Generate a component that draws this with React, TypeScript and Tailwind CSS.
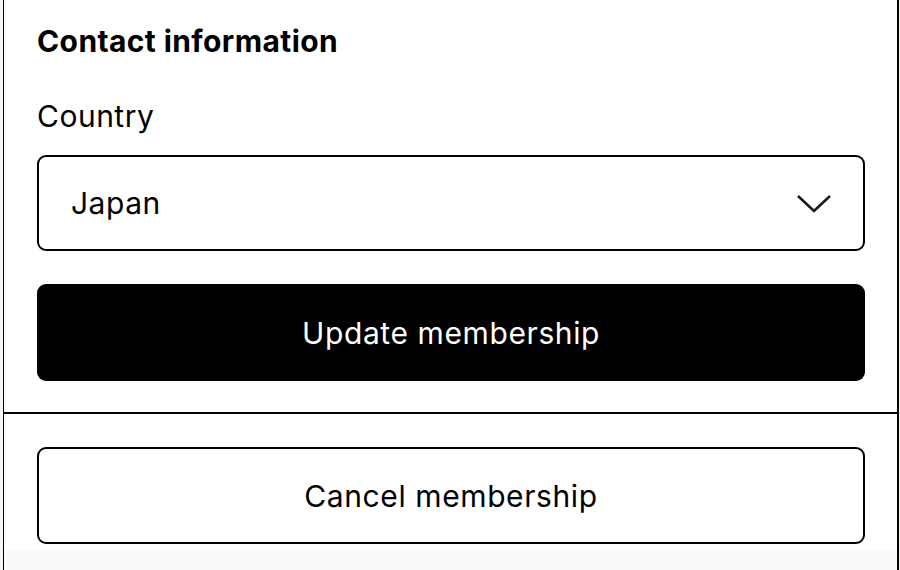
import React from 'react';

const Chevron = () => (
  <svg width="36" height="22" viewBox="0 0 36 22" fill="none" aria-hidden="true">
    <polyline points="2,4 18,19 34,4" stroke="#1a1a1a" strokeWidth="2.6" strokeLinejoin="miter" />
  </svg>
);

const App = () => {
  return (
    <div
      className="w-[900px] h-[570px] overflow-hidden bg-[#f4f4f1] pl-[3px]"
      style={{ fontFamily: 'Inter, "Liberation Sans", sans-serif' }}
    >
      <div className="w-[896px] h-full bg-white border-l border-r-2 border-black text-black flex flex-col">
        <div className="pl-[33px] pr-[32px] pt-[23px] pb-[31px]">
          <h2 className="text-[30px] leading-[36px] font-bold tracking-[0.4px]">Contact information</h2>
          <label className="block mt-[39px] text-[30px] leading-[36px] tracking-[0.5px]">Country</label>
          <div className="mt-[21px] h-[96px] border-2 border-black rounded-[9px] flex items-center justify-between pl-[32px] pr-[31px]">
            <span className="text-[30px] leading-[36px] tracking-[0.5px]">Japan</span>
            <Chevron />
          </div>
          <button className="mt-[33px] w-full h-[97px] bg-black text-white rounded-[9px] text-[30px] leading-[36px] tracking-[0.6px]">
            Update membership
          </button>
        </div>
        <div className="border-t-2 border-black pl-[33px] pr-[32px] pt-[33px]">
          <button className="w-full h-[97px] border-2 border-black rounded-[9px] bg-white text-[30px] leading-[36px] tracking-[0.6px]">
            Cancel membership
          </button>
        </div>
        <div className="mt-[6px] flex-1 bg-[#fafafa]" />
      </div>
    </div>
  );
};

export default App;
